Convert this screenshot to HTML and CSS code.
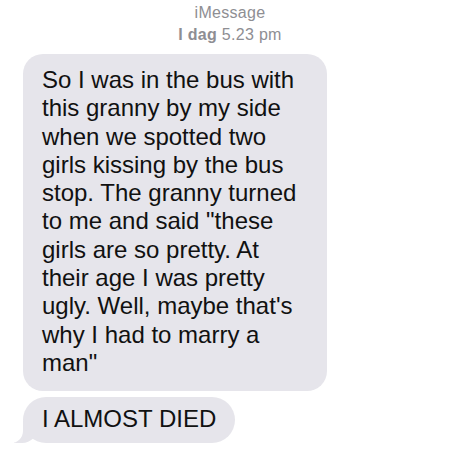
FILE: index.html
```html
<!DOCTYPE html>
<html lang="en">

<head>
    <meta charset="UTF-8">
    <meta name="viewport" content="width=device-width, initial-scale=1.0">
    <title>iMessage</title>
    <link rel="stylesheet" href="styles.css">
</head>

<body>
    <div class="chat">
        <!-- 顶部信息 -->
        <div class="head">
            <p class="service">iMessage</p>
            <p class="time"><b>I dag</b> 5.23 pm</p>
        </div>
        <!-- 消息列表 -->
        <div class="list">
            <p class="bubble">So I was in the bus with<br>this granny by my side<br>when we spotted two<br>girls kissing by the bus<br>stop. The granny turned<br>to me and said "these<br>girls are so pretty. At<br>their age I was pretty<br>ugly. Well, maybe that's<br>why I had to marry a<br>man"</p>
            <p class="bubble tail">I ALMOST DIED</p>
        </div>
    </div>
</body>

</html>
```

FILE: styles.css
```css
* {
    margin: 0;
    padding: 0;
}

body {
    background-color: #fff;
    font-family: "Liberation Sans", Arial, sans-serif;
}

.chat {
    width: 460px;
    height: 460px;
    overflow: hidden;
}

.head {
    padding-top: 2px;
    text-align: center;
    color: #8e8e93;
    font-size: 16px;
    line-height: 22px;
    letter-spacing: 0.3px;
}

.head b {
    font-weight: bold;
}

.list {
    display: flex;
    flex-direction: column;
    align-items: flex-start;
    gap: 6px;
    padding: 8px 0 0 23px;
}

.bubble {
    position: relative;
    padding: 12px 31px 14px 19px;
    background-color: #e6e5eb;
    border-radius: 20px;
    color: #111;
    font-size: 24px;
    line-height: 28.3px;
    white-space: nowrap;
}

.bubble.tail {
    padding: 8px 19px 9px 19px;
    border-radius: 23px;
}

/* 气泡小尾巴 */
.tail::before {
    content: "";
    position: absolute;
    bottom: 0;
    left: -9px;
    width: 24px;
    height: 22px;
    background-color: #e6e5eb;
    border-bottom-right-radius: 16px;
    z-index: -1;
}

.tail::after {
    content: "";
    position: absolute;
    bottom: 0;
    left: -26px;
    width: 26px;
    height: 22px;
    background-color: #fff;
    border-bottom-right-radius: 12px;
}
```
